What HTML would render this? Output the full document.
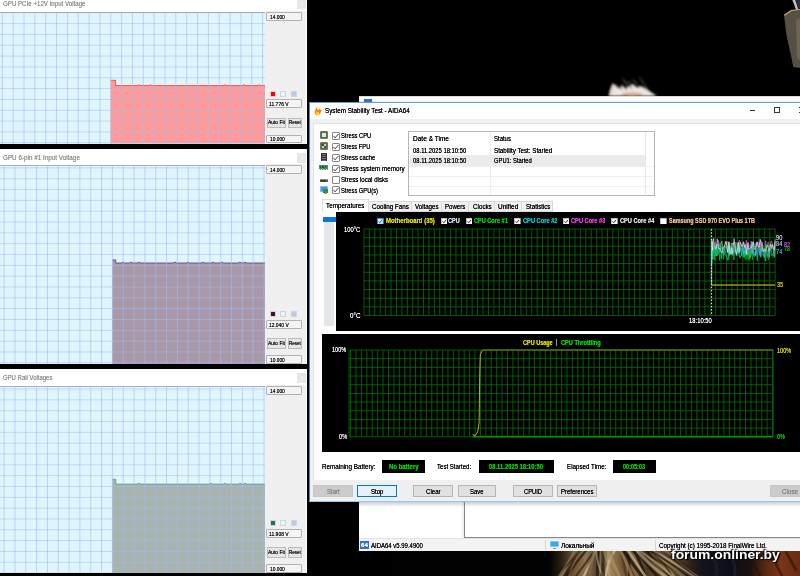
<!DOCTYPE html>
<html><head><meta charset="utf-8"><title>System Stability Test - AIDA64</title>
<style>
*{box-sizing:border-box;margin:0;padding:0}
html,body{width:800px;height:576px;overflow:hidden;background:#000}
body{position:relative;font-family:"Liberation Sans",sans-serif;font-size:8px;color:#000}
.a{position:absolute}
.t{position:absolute;white-space:nowrap;line-height:1;transform-origin:0 0;text-shadow:0 0 .4px currentColor}
.pn{position:absolute;left:0;width:307px;background:#fff;overflow:hidden}
.cls{position:absolute;left:297.1px;width:9px;height:9.7px;background:#e7e7e7}
.gr{position:absolute;left:0;width:265px;background:#dff6ff;overflow:hidden}
.gl{position:absolute;left:0;top:0;width:100%;height:100%;
 background-image:linear-gradient(to right,rgba(160,188,238,.62) 1.15px,transparent 1.15px),linear-gradient(to bottom,rgba(160,188,238,.55) 1.15px,transparent 1.15px);
 background-size:10.91px 11px;background-position:1px 0}
.sb{position:absolute;left:265px;width:41.2px;background:#f0f0f0}
.bx{position:absolute;left:266.2px;width:35.6px;height:8.9px;border:1px solid #b2b2b2;background:#f4f4f4;border-radius:1px}
.bt{position:absolute;height:10.4px;border:1px solid #bcbcbc;background:#e6e6e6}
.sw{position:absolute;width:6px;height:6px;border:1px solid #d4d4d4}
.cb{position:absolute;width:7.5px;height:7.5px;border:1px solid #444;background:#fff}
.btn{position:absolute;top:485px;height:11.7px;border:1px solid #b6b6b6;background:#e1e1e1}
.lb{position:absolute;background:#000}
</style></head>
<body>
<div class="pn" style="top:0px;height:143.6px"><div class="cls" style="top:-0.5px"></div><div class="sb" style="top:11px;height:132.6px"></div><div class="gr" style="top:12px;height:131.6px"><svg class="a" style="left:0;top:0" width="265" height="131.6" viewBox="0 0 265 131.6"><polygon points="110.6,131.6 110.6,68.3 115.6,68.3 115.6,73.6 138,73.6 139,72.4 140,73.6 149.5,73.6 150.5,72.4 151.5,73.6 224,73.6 225,72.4 226,73.6 243,73.6 244,72.4 245,73.6 258,73.6 259,72.4 260,73.6 265,73.6 265,131.6" fill="#ff9a9a"/><polyline points="110.6,68.3 115.6,68.3 115.6,73.6 138,73.6 139,72.4 140,73.6 149.5,73.6 150.5,72.4 151.5,73.6 224,73.6 225,72.4 226,73.6 243,73.6 244,72.4 245,73.6 258,73.6 259,72.4 260,73.6 265,73.6" fill="none" stroke="#ff2a2a" stroke-width="0.9" stroke-opacity=".85"/></svg><div class="gl" style="background-size:10.85px 10.83px;background-position:1.85px 0.3px"></div><div class="a" style="left:0;top:0;width:265px;height:1px;background:#a8adb6"></div></div><div class="bx" style="top:11.8px"></div><div class="sw" style="left:270px;top:90.5px;background:#f00"></div><div class="sw" style="left:280.4px;top:90.5px;background:#e3f9ff"></div><div class="sw" style="left:290.8px;top:90.5px;background:#b3cdf0"></div><div class="bx" style="top:98.9px"></div><div class="bt" style="left:267.2px;width:19px;top:117.5px"></div><div class="bt" style="left:287.6px;width:14px;top:117.5px"></div><div class="bx" style="top:134.5px"></div></div><div class="t" style="left:2.50px;top:-0.06px;font-size:7.8px;color:#929292;transform:scaleX(0.788);">GPU PCIe +12V Input Voltage</div><div class="t" style="left:299.60px;top:0.40px;font-size:7.5px;color:#efefef;transform:scaleX(0.911);">×</div><div class="t" style="left:269.50px;top:14.93px;font-size:5.9px;color:#111;transform:scaleX(0.821);">14.000</div><div class="t" style="left:269.30px;top:102.13px;font-size:5.9px;color:#111;transform:scaleX(0.851);">11.776 V</div><div class="t" style="left:268.40px;top:119.88px;font-size:5.8px;color:#111;transform:scaleX(0.846);">Auto Fit</div><div class="t" style="left:288.90px;top:119.88px;font-size:5.8px;color:#111;transform:scaleX(0.779);">Reset</div><div class="t" style="left:269.50px;top:137.03px;font-size:5.9px;color:#111;transform:scaleX(0.821);">10.000</div><div class="pn" style="top:148.7px;height:215.7px"><div class="cls" style="top:4.3px"></div><div class="sb" style="top:15.6px;height:200.1px"></div><div class="gr" style="top:16.6px;height:199.1px"><svg class="a" style="left:0;top:0" width="265" height="199.1" viewBox="0 0 265 199.1"><polygon points="112.2,199.1 112.2,94.9 115.8,94.9 115.8,98 122,98 123,96.8 124,98 130,98 131,96.8 132,98 138,98 139,96.8 140,98 174,98 175,96.8 176,98 187,98 188,96.8 189,98 202,98 203,96.8 204,98 212,98 213,96.8 214,98 221,98 222,96.8 223,98 239,98 240,96.8 241,98 244,98 245,96.8 246,98 265,98 265,199.1" fill="#a898a8"/><polyline points="112.2,94.9 115.8,94.9 115.8,98 122,98 123,96.8 124,98 130,98 131,96.8 132,98 138,98 139,96.8 140,98 174,98 175,96.8 176,98 187,98 188,96.8 189,98 202,98 203,96.8 204,98 212,98 213,96.8 214,98 221,98 222,96.8 223,98 239,98 240,96.8 241,98 244,98 245,96.8 246,98 265,98" fill="none" stroke="#5a3060" stroke-width="0.9" stroke-opacity=".85"/></svg><div class="gl" style="background-size:10.84px 10.83px;background-position:3.65px 2.4px"></div><div class="a" style="left:0;top:0;width:265px;height:1px;background:#a8adb6"></div></div><div class="bx" style="top:16.4px"></div><div class="sw" style="left:270px;top:162.6px;background:#401040"></div><div class="sw" style="left:280.4px;top:162.6px;background:#e3f9ff"></div><div class="sw" style="left:290.8px;top:162.6px;background:#b3cdf0"></div><div class="bx" style="top:171px"></div><div class="bt" style="left:267.2px;width:19px;top:189.6px"></div><div class="bt" style="left:287.6px;width:14px;top:189.6px"></div><div class="bx" style="top:206.6px"></div></div><div class="t" style="left:2.50px;top:153.54px;font-size:7.8px;color:#929292;transform:scaleX(0.810);">GPU 6-pin #1 Input Voltage</div><div class="t" style="left:299.60px;top:153.90px;font-size:7.5px;color:#efefef;transform:scaleX(0.911);">×</div><div class="t" style="left:269.50px;top:168.23px;font-size:5.9px;color:#111;transform:scaleX(0.821);">14.000</div><div class="t" style="left:269.30px;top:322.93px;font-size:5.9px;color:#111;transform:scaleX(0.835);">12.040 V</div><div class="t" style="left:268.40px;top:340.68px;font-size:5.8px;color:#111;transform:scaleX(0.846);">Auto Fit</div><div class="t" style="left:288.90px;top:340.68px;font-size:5.8px;color:#111;transform:scaleX(0.779);">Reset</div><div class="t" style="left:269.50px;top:357.83px;font-size:5.9px;color:#111;transform:scaleX(0.821);">10.000</div><div class="pn" style="top:369.1px;height:204.3px"><div class="cls" style="top:4.3px"></div><div class="sb" style="top:16px;height:188.3px"></div><div class="gr" style="top:17px;height:187.3px"><svg class="a" style="left:0;top:0" width="265" height="187.3" viewBox="0 0 265 187.3"><polygon points="112.3,187.3 112.3,93.2 115.8,93.2 115.8,98.1 138,98.1 139,96.9 140,98.1 210,98.1 211,96.9 212,98.1 224,98.1 225,96.9 226,98.1 239,98.1 240,96.9 241,98.1 244,98.1 245,96.9 246,98.1 265,98.1 265,187.3" fill="#a8b4b0"/><polyline points="112.3,93.2 115.8,93.2 115.8,98.1 138,98.1 139,96.9 140,98.1 210,98.1 211,96.9 212,98.1 224,98.1 225,96.9 226,98.1 239,98.1 240,96.9 241,98.1 244,98.1 245,96.9 246,98.1 265,98.1" fill="none" stroke="#5f8f88" stroke-width="0.9" stroke-opacity=".85"/></svg><div class="gl" style="background-size:10.84px 10.83px;background-position:3.65px 2.55px"></div><div class="a" style="left:0;top:0;width:265px;height:1px;background:#a8adb6"></div></div><div class="bx" style="top:16.8px"></div><div class="sw" style="left:270px;top:151.2px;background:#207068"></div><div class="sw" style="left:280.4px;top:151.2px;background:#e3f9ff"></div><div class="sw" style="left:290.8px;top:151.2px;background:#b3cdf0"></div><div class="bx" style="top:159.6px"></div><div class="bt" style="left:267.2px;width:19px;top:178.2px"></div><div class="bt" style="left:287.6px;width:14px;top:178.2px"></div><div class="bx" style="top:195.2px"></div></div><div class="t" style="left:2.50px;top:373.94px;font-size:7.8px;color:#929292;transform:scaleX(0.765);">GPU Rail Voltages</div><div class="t" style="left:299.60px;top:374.30px;font-size:7.5px;color:#efefef;transform:scaleX(0.911);">×</div><div class="t" style="left:269.50px;top:389.03px;font-size:5.9px;color:#111;transform:scaleX(0.821);">14.000</div><div class="t" style="left:269.30px;top:531.93px;font-size:5.9px;color:#111;transform:scaleX(0.851);">11.908 V</div><div class="t" style="left:268.40px;top:549.68px;font-size:5.8px;color:#111;transform:scaleX(0.846);">Auto Fit</div><div class="t" style="left:288.90px;top:549.68px;font-size:5.8px;color:#111;transform:scaleX(0.779);">Reset</div><div class="t" style="left:269.50px;top:566.83px;font-size:5.9px;color:#111;transform:scaleX(0.821);">10.000</div><svg class="a" style="left:308px;top:0" width="492" height="576" viewBox="308 0 492 576">
<defs>
<filter id="b1" x="-20%" y="-20%" width="140%" height="140%"><feGaussianBlur stdDeviation="1.2"/></filter>
<filter id="b3" x="-20%" y="-40%" width="140%" height="180%"><feGaussianBlur stdDeviation="0.9"/></filter>
<filter id="b2" x="-20%" y="-20%" width="140%" height="140%"><feGaussianBlur stdDeviation="0.7"/></filter>
<clipPath id="furclip"><rect x="308" y="551" width="492" height="25"/></clipPath>
<linearGradient id="fur" x1="0" x2="1" y1="0" y2="0">
<stop offset="0" stop-color="#000"/><stop offset=".49" stop-color="#020202"/>
<stop offset=".515" stop-color="#2a2014"/><stop offset=".54" stop-color="#6a5434"/><stop offset=".565" stop-color="#8c7450"/><stop offset=".59" stop-color="#4a3a24"/>
<stop offset=".615" stop-color="#9a8058"/><stop offset=".64" stop-color="#6a5230"/><stop offset=".665" stop-color="#86683c"/>
<stop offset=".69" stop-color="#4a3822"/><stop offset=".72" stop-color="#7a5c34"/><stop offset=".75" stop-color="#5a4228"/><stop offset=".78" stop-color="#2a2018"/>
<stop offset=".80" stop-color="#14141c"/><stop offset=".86" stop-color="#0c0e18"/><stop offset=".90" stop-color="#1a1210"/><stop offset=".93" stop-color="#5a2812"/><stop offset=".96" stop-color="#7a3616"/><stop offset="1" stop-color="#6a2c12"/>
</linearGradient>
</defs>
<rect x="308" y="551" width="492" height="25" fill="url(#fur)"/>
<!-- white fur tuft top -->
<g filter="url(#b3)">
<path d="M608.6 96 L609.8 90 L612.5 83.2 L616 85.5 L619 88.6 L622.5 85 L626 88.4 L629 86 L633 84 L637 87.4 L641 86 L646 88.5 L651 92 L657 96 Z" fill="#ded6ce"/>
<path d="M612 96 L614 89 L622 88 L630 87 L640 88.5 L648 92 L653 96 Z" fill="#efe8e2"/>
<ellipse cx="632" cy="94.2" rx="11" ry="2.2" fill="#d8b09e"/>
<path d="M616.5 84 L622 90 M619.5 82 L627 90 M624 80 L632 89" stroke="#0a0a0a" stroke-width="1.1" stroke-opacity=".8" fill="none"/>
<path d="M622.6 78.6 L628 86 M632.6 79 L640 88 M639.5 77.5 L648 89.5 M628 80.5 L634 87" stroke="#c8c8c4" stroke-width="0.9" stroke-opacity=".6" fill="none"/>
</g>
<!-- object top-right -->
<g filter="url(#b2)">
<path d="M791 10.4 L800 9 L800 68 L793.3 67 L791 55.5 L786.4 34.7 L784 15.3 Z" fill="#575044"/>
<path d="M796 20 L800 18 L800 60 L797 58 Z" fill="#6e6556"/>
<path d="M784.3 15.4 L791 10.6 L800 9.4" stroke="#b89872" stroke-width="1.3" fill="none"/>
<path d="M792.4 0 L795.2 0 L798.2 9 L796 9.4 Z" fill="#c6c6be"/>
<path d="M795.6 0 L800 0 L800 8.6 L798.4 8.8 Z" fill="#2c3242"/>
</g>
<!-- fur streaks bottom -->
<g filter="url(#b2)" stroke-linecap="round" fill="none" clip-path="url(#furclip)">
<path d="M589.2 546.7 Q568.1 564.5 551.6 578" stroke="#1a120a" stroke-width="3.2" stroke-opacity="0.53"/>
<path d="M579.8 542.5 Q568.9 561.4 557.5 578" stroke="#a88c60" stroke-width="1.8" stroke-opacity="0.47"/>
<path d="M592.6 542.4 Q570.0 562.5 559.9 578" stroke="#a88c60" stroke-width="2.7" stroke-opacity="0.69"/>
<path d="M590.3 545.0 Q576.7 561.2 565.9 578" stroke="#0c0806" stroke-width="2.5" stroke-opacity="0.56"/>
<path d="M586.0 543.4 Q573.4 558.1 563.7 578" stroke="#2a1c10" stroke-width="2.9" stroke-opacity="0.76"/>
<path d="M582.1 546.1 Q573.0 564.6 568.0 578" stroke="#8a6c44" stroke-width="1.7" stroke-opacity="0.47"/>
<path d="M596.3 546.7 Q582.7 559.9 579.4 578" stroke="#8a6c44" stroke-width="1.7" stroke-opacity="0.58"/>
<path d="M599.8 542.1 Q588.7 560.0 574.5 578" stroke="#2a1c10" stroke-width="1.8" stroke-opacity="0.72"/>
<path d="M595.1 544.4 Q593.4 558.2 587.7 578" stroke="#a88c60" stroke-width="2.4" stroke-opacity="0.80"/>
<path d="M597.1 547.1 Q592.9 560.2 582.5 578" stroke="#c8b48e" stroke-width="2.0" stroke-opacity="0.85"/>
<path d="M598.3 542.4 Q590.8 561.0 587.5 578" stroke="#4a3420" stroke-width="3.1" stroke-opacity="0.46"/>
<path d="M602.1 545.4 Q601.3 559.8 598.0 578" stroke="#a88c60" stroke-width="3.3" stroke-opacity="0.51"/>
<path d="M597.6 545.8 Q598.2 563.0 597.5 578" stroke="#0c0806" stroke-width="2.9" stroke-opacity="0.61"/>
<path d="M596.4 547.8 Q595.8 564.1 604.3 578" stroke="#c8b48e" stroke-width="1.8" stroke-opacity="0.55"/>
<path d="M616.1 547.9 Q606.5 562.8 605.8 578" stroke="#d8c8a8" stroke-width="2.5" stroke-opacity="0.71"/>
<path d="M602.8 542.1 Q602.6 559.7 603.2 578" stroke="#0c0806" stroke-width="3.3" stroke-opacity="0.47"/>
<path d="M603.0 544.7 Q605.0 562.7 615.8 578" stroke="#a88c60" stroke-width="1.8" stroke-opacity="0.66"/>
<path d="M609.2 543.9 Q607.1 561.5 609.3 578" stroke="#c8b48e" stroke-width="2.5" stroke-opacity="0.48"/>
<path d="M605.0 545.3 Q613.7 564.0 620.2 578" stroke="#a88c60" stroke-width="3.4" stroke-opacity="0.74"/>
<path d="M619.2 547.4 Q624.4 562.2 626.6 578" stroke="#4a3420" stroke-width="2.2" stroke-opacity="0.77"/>
<path d="M607.5 542.4 Q612.7 557.9 625.1 578" stroke="#8a6c44" stroke-width="2.3" stroke-opacity="0.55"/>
<path d="M625.5 542.5 Q630.0 557.4 629.2 578" stroke="#1a120a" stroke-width="2.4" stroke-opacity="0.69"/>
<path d="M622.4 547.5 Q625.1 559.8 634.7 578" stroke="#2a1c10" stroke-width="2.5" stroke-opacity="0.57"/>
<path d="M618.4 547.6 Q626.9 561.2 632.6 578" stroke="#a88c60" stroke-width="3.0" stroke-opacity="0.61"/>
<path d="M621.0 545.5 Q628.5 559.6 643.7 578" stroke="#0c0806" stroke-width="3.2" stroke-opacity="0.65"/>
<path d="M621.0 543.0 Q632.1 559.2 643.2 578" stroke="#2a1c10" stroke-width="3.3" stroke-opacity="0.54"/>
<path d="M631.6 547.1 Q641.2 561.4 645.7 578" stroke="#1a120a" stroke-width="2.8" stroke-opacity="0.78"/>
<path d="M625.2 546.7 Q634.0 560.2 646.6 578" stroke="#d8c8a8" stroke-width="2.6" stroke-opacity="0.63"/>
<path d="M637.1 547.9 Q643.1 560.6 658.6 578" stroke="#0c0806" stroke-width="3.0" stroke-opacity="0.66"/>
<path d="M626.6 544.9 Q640.3 558.5 662.9 578" stroke="#2a1c10" stroke-width="2.8" stroke-opacity="0.64"/>
<path d="M634.8 547.7 Q649.0 565.8 667.5 578" stroke="#d8c8a8" stroke-width="3.0" stroke-opacity="0.51"/>
<path d="M644.5 546.3 Q652.3 561.9 672.5 578" stroke="#0c0806" stroke-width="1.8" stroke-opacity="0.70"/>
<path d="M646.3 544.8 Q660.2 559.6 674.8 578" stroke="#b89c70" stroke-width="3.0" stroke-opacity="0.74"/>
<path d="M647.3 547.9 Q666.0 563.2 672.9 578" stroke="#2a1c10" stroke-width="2.0" stroke-opacity="0.77"/>
<path d="M633.1 544.6 Q657.0 562.9 674.2 578" stroke="#c8b48e" stroke-width="2.2" stroke-opacity="0.64"/>
<path d="M634.2 545.2 Q661.1 564.1 690.4 578" stroke="#2a1c10" stroke-width="2.4" stroke-opacity="0.64"/>
<path d="M649.4 547.7 Q669.2 565.5 685.8 578" stroke="#b89c70" stroke-width="3.1" stroke-opacity="0.48"/>
<path d="M648.6 543.0 Q670.9 562.9 695.0 578" stroke="#d8c8a8" stroke-width="3.1" stroke-opacity="0.55"/>
<path d="M642.4 545.3 Q667.8 561.6 693.2 578" stroke="#0c0806" stroke-width="2.1" stroke-opacity="0.61"/>
<path d="M660.0 545.1 Q679.2 563.4 700.2 578" stroke="#8a6c44" stroke-width="1.6" stroke-opacity="0.68"/>
<path d="M651.7 547.5 Q681.2 562.2 704.5 578" stroke="#2a1c10" stroke-width="3.3" stroke-opacity="0.55"/>
<path d="M770 552 L782 576 M786 552 L796 570 M752 560 L760 576" stroke="#2a0e06" stroke-width="2.6" stroke-opacity=".6"/>
<path d="M705 552 Q720 560 716 576 M728 552 Q738 566 734 576" stroke="#1c2230" stroke-width="3" stroke-opacity=".7"/>
</g>
</svg><div class="a" style="left:358.5px;top:95.5px;width:442px;height:455.5px;background:linear-gradient(to bottom,#c8c8c8 0,#fdfdfd 1.4px,#fdfdfd 3.6px,#ececec 6.4px);overflow:hidden"><div class="a" style="left:5px;top:3px;width:8.5px;height:8.5px;background:#2a6fd0"></div></div><div class="t" style="left:375.50px;top:100.54px;font-size:7.8px;color:#a8a8a8;transform:scaleX(0.783);">AIDA64 Extreme</div><div class="a" style="left:358.5px;top:501.8px;width:441.5px;height:36.7px;background:#fff"></div><div class="a" style="left:461.5px;top:501px;width:3px;height:37.5px;background:#f0f0f0"></div><div class="a" style="left:464px;top:501px;width:336px;height:37px;border-left:1px solid #828790;border-bottom:1px solid #828790"></div><div class="a" style="left:358.5px;top:501.8px;width:441.5px;height:5px;background:linear-gradient(to bottom,rgba(90,120,160,.35),rgba(120,140,170,0))"></div><div class="a" style="left:358.5px;top:538.4px;width:441.5px;height:12.6px;background:#f3f3f3;border-top:1px solid #e2e2e2"></div><div class="a" style="left:360.2px;top:541px;width:8.6px;height:8.4px;background:#2f6fd0"></div><div class="t" style="left:361.00px;top:542.08px;font-size:6px;color:#fff;transform:scaleX(1.017);font-weight:bold;">64</div><div class="t" style="left:370.80px;top:541.54px;font-size:7.8px;color:#000;transform:scaleX(0.767);">AIDA64 v5.99.4900</div><div class="a" style="left:545px;top:540px;width:1px;height:10px;background:#d4d4d4"></div><div class="a" style="left:655px;top:540px;width:1px;height:10px;background:#d4d4d4"></div><div class="a" style="left:550px;top:541px;width:8.6px;height:6px;background:#35a8f0;border:1px solid #7fc6f5;border-radius:1px"></div><div class="a" style="left:552.5px;top:547.5px;width:3.6px;height:1.6px;background:#8a9aa8"></div><div class="t" style="left:561.00px;top:541.54px;font-size:7.8px;color:#000;transform:scaleX(0.832);">Локальный</div><div class="t" style="left:658.50px;top:541.54px;font-size:7.8px;color:#000;transform:scaleX(0.802);">Copyright (c) 1995-2018 FinalWire Ltd.</div><div class="t" style="left:670.50px;top:548.65px;font-size:12.6px;color:#fff;transform:scaleX(1.103);font-weight:bold;text-shadow:0 0 2px #000,1px 1px 1px #000,-1px -1px 1px rgba(0,0,0,.8);z-index:50">forum.onliner.by</div><div class="a" style="left:308.6px;top:101.8px;width:500px;height:400.4px;background:#f0f0f0;border-top:1px solid #5e9ed6;border-left:1px solid #4d82bd;border-bottom:1px solid #9cc4ea"></div><div class="a" style="left:309.6px;top:102.6px;width:491px;height:16.3px;background:#fff"></div><svg class="a" style="left:314px;top:105.5px;overflow:visible" width="8" height="10" viewBox="0 0 8 10"><defs><filter id="fb" x="-30%" y="-30%" width="160%" height="160%"><feGaussianBlur stdDeviation="0.35"/></filter><filter id="fb2" x="-50%" y="-50%" width="200%" height="200%"><feGaussianBlur stdDeviation="0.6"/></filter></defs><path filter="url(#fb)" d="M2 0.7 C2.6 2 3.6 3.2 4.2 4.3 C4.8 3.8 5.4 3 5.7 2.2 C6 2.8 6.2 3.2 6.4 3.8 C6.8 3.6 7.1 3.4 7.4 3.1 C7.6 4.2 7.4 5.2 6.8 6.2 C6.2 7.8 4.8 9.2 3.4 9.2 C2 9.2 0.8 8 0.8 6.5 C0.8 5.8 1 5.2 1.3 4.6 C1.9 3.4 2.1 2 2 0.7 Z" fill="#ff7c0a"/><ellipse filter="url(#fb2)" cx="3.5" cy="7.3" rx="1.5" ry="1.7" fill="#ffe000"/></svg><div class="t" style="left:325.30px;top:107.34px;font-size:8px;color:#000;transform:scaleX(0.785);">System Stability Test - AIDA64</div><div class="a" style="left:749.6px;top:109.8px;width:5.4px;height:1px;background:#333"></div><div class="a" style="left:774px;top:107px;width:5.8px;height:5.8px;border:1px solid #333"></div><svg class="a" style="left:798.5px;top:107px" width="6" height="6" viewBox="0 0 6 6"><path d="M0 0L6 6M6 0L0 6" stroke="#333" stroke-width="1"/></svg><div class="a" style="left:313.4px;top:123.4px;width:490px;height:356.6px;background:#fff;border-left:1px solid #e4e4e4;border-top:1px solid #e4e4e4"></div><svg class="a" style="left:332px;top:132px" width="8" height="8" viewBox="0 0 8 8"><rect x="0.5" y="0.5" width="7" height="7" rx="0.5" fill="#fff" stroke="#707070" stroke-width="0.85"/><path d="M1.5 4.0L3.1 5.8L6.5 1.9" fill="none" stroke="#404040" stroke-width="1"/></svg><div class="t" style="left:341.00px;top:131.94px;font-size:8px;color:#000;transform:scaleX(0.725);">Stress CPU</div><svg class="a" style="left:332px;top:143px" width="8" height="8" viewBox="0 0 8 8"><rect x="0.5" y="0.5" width="7" height="7" rx="0.5" fill="#fff" stroke="#707070" stroke-width="0.85"/><path d="M1.5 4.0L3.1 5.8L6.5 1.9" fill="none" stroke="#404040" stroke-width="1"/></svg><div class="t" style="left:341.00px;top:143.14px;font-size:8px;color:#000;transform:scaleX(0.716);">Stress FPU</div><svg class="a" style="left:332px;top:154px" width="8" height="8" viewBox="0 0 8 8"><rect x="0.5" y="0.5" width="7" height="7" rx="0.5" fill="#fff" stroke="#707070" stroke-width="0.85"/><path d="M1.5 4.0L3.1 5.8L6.5 1.9" fill="none" stroke="#404040" stroke-width="1"/></svg><div class="t" style="left:341.00px;top:154.14px;font-size:8px;color:#000;transform:scaleX(0.744);">Stress cache</div><svg class="a" style="left:332px;top:165px" width="8" height="8" viewBox="0 0 8 8"><rect x="0.5" y="0.5" width="7" height="7" rx="0.5" fill="#fff" stroke="#707070" stroke-width="0.85"/><path d="M1.5 4.0L3.1 5.8L6.5 1.9" fill="none" stroke="#404040" stroke-width="1"/></svg><div class="t" style="left:341.00px;top:165.04px;font-size:8px;color:#000;transform:scaleX(0.782);">Stress system memory</div><svg class="a" style="left:332px;top:176px" width="8" height="8" viewBox="0 0 8 8"><rect x="0.5" y="0.5" width="7" height="7" rx="0.5" fill="#fff" stroke="#707070" stroke-width="0.85"/></svg><div class="t" style="left:341.00px;top:175.84px;font-size:8px;color:#000;transform:scaleX(0.761);">Stress local disks</div><svg class="a" style="left:332px;top:186px" width="8" height="8" viewBox="0 0 8 8"><rect x="0.5" y="0.5" width="7" height="7" rx="0.5" fill="#fff" stroke="#707070" stroke-width="0.85"/><path d="M1.5 4.0L3.1 5.8L6.5 1.9" fill="none" stroke="#404040" stroke-width="1"/></svg><div class="t" style="left:341.00px;top:186.64px;font-size:8px;color:#000;transform:scaleX(0.718);">Stress GPU(s)</div><div class="a" style="left:319.8px;top:131px;width:8.2px;height:8px;background:#3f7d4e;border:1px solid #7a7448;border-radius:1px"><div class="a" style="left:1px;top:1px;width:4.2px;height:4px;background:#e4e6e4"></div></div><div class="a" style="left:319.8px;top:141.9px;width:8.2px;height:8px;background:#3f7d4e;border:1px solid #7a7448;border-radius:1px"><div class="a" style="left:1px;top:1px;width:4.2px;height:4px;background:#c8d0c8"></div><div class="a" style="left:1.4px;top:1.4px;width:1.8px;height:1.8px;background:#444"></div><div class="a" style="left:3.2px;top:3.2px;width:1.8px;height:1.6px;background:#555"></div></div><div class="a" style="left:320.7px;top:152.6px;width:6.4px;height:8.2px;background:repeating-linear-gradient(to bottom,#3a3a3a 0 1.3px,#6e6e6e 1.3px 2.05px);border-left:1px solid #2a2a2a;border-right:1px solid #2a2a2a"></div><div class="a" style="left:319.2px;top:165px;width:8.8px;height:4px;background:#3a9858"></div><div class="a" style="left:320px;top:166px;width:7.2px;height:1.8px;background:repeating-linear-gradient(to right,#1e5a34 0 1.4px,#3a9858 1.4px 2.4px)"></div><div class="a" style="left:319.6px;top:169px;width:8px;height:1px;background:repeating-linear-gradient(to right,#8a8a5a 0 1px,#ddd 1px 1.8px)"></div><div class="a" style="left:320px;top:178.8px;width:7.6px;height:3.2px;background:#3c3c3c;border-radius:1px;border-top:1px solid #8a8a8a"></div><div class="a" style="left:325.6px;top:180.4px;width:1.2px;height:1px;background:#4c4"></div><div class="a" style="left:319.5px;top:186px;width:8.5px;height:5.6px;background:#2f9cf0;border:1px solid #7cc0f4"></div><div class="a" style="left:323.2px;top:189.4px;width:4.8px;height:3.4px;background:#3a8a3a"></div><div class="a" style="left:323.8px;top:192.6px;width:3.6px;height:0.8px;background:#c8a040"></div><div class="a" style="left:408.3px;top:131.3px;width:247.2px;height:64.4px;background:#fff;border:1px solid #b0b5be"></div><div class="a" style="left:409.8px;top:155.1px;width:234.8px;height:10.9px;background:#ebebeb"></div><div class="a" style="left:490px;top:132.3px;width:1px;height:62px;background:#ececec"></div><div class="a" style="left:644.6px;top:132.3px;width:1px;height:62px;background:#e6e6e6"></div><div class="a" style="left:409.3px;top:165.6px;width:245px;height:1px;background:#f0f0f0"></div><div class="a" style="left:409.3px;top:176px;width:245px;height:1px;background:#f0f0f0"></div><div class="a" style="left:409.3px;top:186.2px;width:245px;height:1px;background:#f0f0f0"></div><div class="t" style="left:412.50px;top:135.44px;font-size:8px;color:#000;transform:scaleX(0.818);">Date &amp; Time</div><div class="t" style="left:493.70px;top:135.44px;font-size:8px;color:#000;transform:scaleX(0.745);">Status</div><div class="t" style="left:412.50px;top:147.14px;font-size:8px;color:#000;transform:scaleX(0.731);">08.11.2025 18:10:50</div><div class="t" style="left:493.70px;top:147.14px;font-size:8px;color:#000;transform:scaleX(0.777);">Stability Test: Started</div><div class="t" style="left:412.50px;top:157.04px;font-size:8px;color:#000;transform:scaleX(0.731);">08.11.2025 18:10:50</div><div class="t" style="left:493.70px;top:157.04px;font-size:8px;color:#000;transform:scaleX(0.725);">GPU1: Started</div><div class="a" style="left:322px;top:199.3px;width:47.2px;height:13px;background:#fff;border:1px solid #dedede;border-bottom:none"></div><div class="t" style="left:326.25px;top:201.74px;font-size:8px;color:#000;transform:scaleX(0.786);">Temperatures</div><div class="a" style="left:369.2px;top:201.2px;width:42.8px;height:10.8px;background:#f0f0f0;border:1px solid #d9d9d9;border-left:none"></div><div class="t" style="left:371.60px;top:202.54px;font-size:8px;color:#000;transform:scaleX(0.781);">Cooling Fans</div><div class="a" style="left:412px;top:201.2px;width:29.8px;height:10.8px;background:#f0f0f0;border:1px solid #d9d9d9;border-left:none"></div><div class="t" style="left:415.30px;top:202.54px;font-size:8px;color:#000;transform:scaleX(0.764);">Voltages</div><div class="a" style="left:441.8px;top:201.2px;width:27px;height:10.8px;background:#f0f0f0;border:1px solid #d9d9d9;border-left:none"></div><div class="t" style="left:445.30px;top:202.54px;font-size:8px;color:#000;transform:scaleX(0.761);">Powers</div><div class="a" style="left:468.8px;top:201.2px;width:26px;height:10.8px;background:#f0f0f0;border:1px solid #d9d9d9;border-left:none"></div><div class="t" style="left:472.50px;top:202.54px;font-size:8px;color:#000;transform:scaleX(0.781);">Clocks</div><div class="a" style="left:494.8px;top:201.2px;width:27.2px;height:10.8px;background:#f0f0f0;border:1px solid #d9d9d9;border-left:none"></div><div class="t" style="left:498.40px;top:202.54px;font-size:8px;color:#000;transform:scaleX(0.817);">Unified</div><div class="a" style="left:522px;top:201.2px;width:31.4px;height:10.8px;background:#f0f0f0;border:1px solid #d9d9d9;border-left:none"></div><div class="t" style="left:525.60px;top:202.54px;font-size:8px;color:#000;transform:scaleX(0.762);">Statistics</div><div class="a" style="left:324.2px;top:221.6px;width:9.8px;height:104.6px;background:#e3e7ea"></div><div class="a" style="left:322.8px;top:216.6px;width:12.8px;height:5.2px;background:#0a78d7"></div><div class="lb" style="left:335.8px;top:211.8px;width:470px;height:119.1px"></div><div class="lb" style="left:321.8px;top:333.6px;width:480px;height:118px"></div><svg class="a" style="left:363.9px;top:228.8px;overflow:visible" width="411.1" height="86.5" viewBox="0 0 411.1 86.5"><path d="M0.00 0V86.50M5.41 0V86.50M10.82 0V86.50M16.23 0V86.50M21.64 0V86.50M27.05 0V86.50M32.46 0V86.50M37.87 0V86.50M43.28 0V86.50M48.69 0V86.50M54.10 0V86.50M59.51 0V86.50M64.92 0V86.50M70.33 0V86.50M75.74 0V86.50M81.15 0V86.50M86.56 0V86.50M91.97 0V86.50M97.38 0V86.50M102.79 0V86.50M108.20 0V86.50M113.61 0V86.50M119.02 0V86.50M124.43 0V86.50M129.84 0V86.50M135.25 0V86.50M140.66 0V86.50M146.07 0V86.50M151.48 0V86.50M156.89 0V86.50M162.30 0V86.50M167.71 0V86.50M173.12 0V86.50M178.53 0V86.50M183.94 0V86.50M189.35 0V86.50M194.76 0V86.50M200.17 0V86.50M205.58 0V86.50M210.99 0V86.50M216.40 0V86.50M221.81 0V86.50M227.22 0V86.50M232.63 0V86.50M238.04 0V86.50M243.45 0V86.50M248.86 0V86.50M254.27 0V86.50M259.68 0V86.50M265.09 0V86.50M270.50 0V86.50M275.91 0V86.50M281.32 0V86.50M286.73 0V86.50M292.14 0V86.50M297.55 0V86.50M302.96 0V86.50M308.37 0V86.50M313.78 0V86.50M319.19 0V86.50M324.60 0V86.50M330.01 0V86.50M335.42 0V86.50M340.83 0V86.50M346.24 0V86.50M351.65 0V86.50M357.06 0V86.50M362.47 0V86.50M367.88 0V86.50M373.29 0V86.50M378.70 0V86.50M384.11 0V86.50M389.52 0V86.50M394.93 0V86.50M400.34 0V86.50M405.75 0V86.50M411.10 0V86.50M0 0.00H411.10M0 8.65H411.10M0 17.30H411.10M0 25.95H411.10M0 34.60H411.10M0 43.25H411.10M0 51.90H411.10M0 60.55H411.10M0 69.20H411.10M0 77.85H411.10M0 86.50H411.10" stroke="#006e00" stroke-width="0.85" fill="none"/><path d="M347.60 0V86.50" stroke="#f0f0f0" stroke-width="1" stroke-dasharray="1.6 1.6" fill="none"/><path d="M347.60 56.02H411.10" stroke="#a49400" stroke-width="1.3" fill="none"/><polyline points="347.60,34.60 347.90,12.98 348.50,13.07 349.62,21.80 350.43,18.58 351.27,20.75 352.49,14.89 353.81,25.22 355.06,22.80 356.10,22.68 357.22,14.46 357.88,12.02 358.81,20.40 359.89,18.34 360.58,18.78 361.33,12.41 362.34,14.02 363.11,19.89 363.79,23.30 364.62,12.93 365.31,23.27 366.29,19.61 367.26,26.01 368.34,13.94 369.12,16.25 369.78,13.07 370.83,13.06 372.19,25.61 373.25,21.86 374.09,13.35 375.06,25.79 375.69,28.47 376.76,28.26 377.65,24.21 378.36,14.87 379.66,25.17 380.74,21.63 381.95,26.57 383.03,17.76 384.04,21.00 384.94,19.51 386.16,28.16 387.25,12.19 388.23,25.23 388.91,13.11 389.62,26.06 390.66,27.58 391.46,25.96 392.17,15.19 393.35,13.20 394.13,18.60 395.01,18.59 396.05,14.20 396.87,28.25 398.16,13.15 399.51,23.24 400.80,28.46 402.10,16.31 402.75,21.51 403.46,26.70 404.07,27.57 405.06,21.59 406.44,13.15 407.56,11.95 408.34,16.34 409.66,20.74 410.62,28.26 411.10,12.98" fill="none" stroke="#b0c0e0" stroke-width="0.62" stroke-linejoin="miter"/><polyline points="347.60,34.60 347.90,12.11 348.50,28.03 349.65,22.83 350.43,14.26 351.62,12.95 352.39,26.75 353.66,24.43 354.48,11.49 355.73,16.85 356.92,17.15 357.73,20.02 358.93,20.55 359.83,26.15 360.52,17.11 361.91,19.39 363.11,12.33 364.06,14.36 365.08,26.89 366.16,25.23 367.16,14.21 367.91,24.94 369.03,20.93 370.21,24.16 370.92,16.74 372.03,13.45 373.33,17.06 374.09,21.07 375.26,11.07 376.35,22.59 377.44,19.04 378.33,21.38 379.16,12.30 379.85,14.93 380.97,19.49 381.60,26.30 382.27,10.95 382.97,25.93 384.05,13.21 384.94,24.51 385.81,29.47 386.82,27.95 387.66,13.08 388.99,22.15 390.14,22.15 391.21,25.80 392.04,13.72 392.67,25.01 393.87,24.53 395.09,13.17 396.14,26.03 397.08,11.53 397.77,22.53 398.62,24.73 399.32,26.80 400.62,24.16 401.65,11.78 402.51,19.47 403.21,14.16 404.50,13.17 405.40,28.62 406.17,18.34 407.52,15.97 408.47,18.77 409.74,23.49 410.45,16.98 411.10,12.11" fill="none" stroke="#f050f0" stroke-width="0.66" stroke-linejoin="miter"/><polyline points="347.60,34.60 347.90,14.71 348.50,30.49 349.63,17.77 350.53,31.26 351.69,21.95 352.81,15.93 353.54,26.61 354.80,14.88 355.67,31.42 356.28,13.90 357.29,13.59 358.65,16.01 359.36,30.31 360.09,26.68 360.82,23.42 361.76,22.71 362.67,14.71 364.04,20.96 364.93,30.65 366.06,16.81 366.96,19.59 367.96,14.30 368.90,25.09 369.84,31.07 370.52,25.50 371.68,16.63 372.56,26.67 373.52,16.61 374.50,22.67 375.87,13.86 376.76,14.61 378.09,16.67 379.31,28.38 379.91,15.17 381.30,22.46 381.92,31.15 383.19,25.02 384.21,30.33 385.02,18.81 385.75,31.58 386.57,22.35 387.73,25.16 388.55,30.62 389.71,14.02 390.65,15.96 392.03,21.32 393.37,20.06 394.30,18.74 395.53,23.91 396.43,21.90 397.04,18.72 398.28,18.66 399.31,23.62 399.98,28.74 401.33,22.10 402.43,15.53 403.59,28.40 404.51,30.63 405.23,16.48 406.38,21.00 407.73,27.31 408.72,28.07 409.86,28.37 410.72,27.09 411.10,14.71" fill="none" stroke="#00d800" stroke-width="0.66" stroke-linejoin="miter"/><polyline points="347.60,34.60 347.90,16.43 348.50,30.02 349.84,29.79 350.91,17.25 352.01,26.73 352.86,16.12 354.01,15.46 355.38,22.40 356.11,17.19 356.76,18.28 357.38,29.49 358.65,22.19 359.65,23.71 360.48,19.24 361.75,24.89 362.53,27.82 363.75,31.31 364.65,20.47 365.26,15.74 366.23,24.21 366.89,21.04 367.71,17.94 369.08,26.53 369.87,18.98 371.11,17.07 372.07,16.42 372.77,26.54 373.71,18.18 375.09,24.98 376.40,17.70 377.68,26.67 379.07,18.22 380.29,28.84 380.95,16.99 381.74,24.42 382.70,23.49 383.76,25.99 384.49,20.72 385.29,16.39 386.64,15.59 387.94,24.01 388.63,15.54 389.42,25.37 390.68,25.07 391.42,26.94 392.20,20.43 393.29,31.63 394.06,18.18 395.01,18.53 395.91,26.41 396.80,19.36 397.92,22.65 398.63,19.13 399.96,19.51 400.58,23.50 401.76,32.00 402.42,21.39 403.74,21.66 404.98,24.59 406.13,20.27 407.06,20.34 408.12,24.33 409.19,26.84 410.30,20.20 411.10,16.43" fill="none" stroke="#00d8d8" stroke-width="0.66" stroke-linejoin="miter"/><polyline points="347.60,56.23 347.90,10.38 348.50,21.36 349.69,9.39 350.30,15.79 351.59,19.46 352.46,19.12 353.27,9.88 354.57,19.60 355.91,19.53 356.87,21.81 357.92,24.01 359.27,18.09 360.56,17.38 361.92,12.61 362.65,15.72 363.83,23.68 365.14,12.71 365.78,25.23 366.82,23.71 367.56,18.51 368.35,25.16 369.21,18.66 370.16,9.69 371.40,21.97 372.39,25.23 373.73,19.07 374.37,13.61 375.09,23.62 376.47,12.91 377.75,17.61 378.97,15.70 379.78,13.11 380.64,18.30 381.52,15.60 382.60,25.15 383.84,14.04 384.45,18.56 385.36,20.26 386.16,18.70 387.49,18.84 388.34,15.62 389.22,12.49 390.51,20.55 391.77,18.67 393.09,12.77 393.96,16.90 394.95,18.18 396.18,10.17 396.91,14.49 398.03,16.88 399.23,22.50 400.28,20.49 401.30,22.16 402.47,18.64 403.76,15.95 404.69,22.04 405.50,20.95 406.84,14.94 407.52,19.75 408.66,15.46 409.69,19.55 410.41,20.99 411.10,10.38" fill="none" stroke="#f4f4f4" stroke-width="0.6" stroke-linejoin="miter"/></svg><svg class="a" style="left:377.2px;top:217.6px" width="6.6" height="6.6" viewBox="0 0 6.6 6.6"><rect x="0.3" y="0.3" width="6" height="6" fill="#dcebfd" stroke="#2f86e0" stroke-width="0.9"/><path d="M1.5 3.4L2.8 4.8L5.1 1.8" fill="none" stroke="#1565c8" stroke-width="0.95"/></svg><div class="t" style="left:385.60px;top:217.46px;font-size:7.2px;color:#dcdc00;transform:scaleX(0.831);font-weight:bold;">Motherboard (35)</div><svg class="a" style="left:440.6px;top:217.6px" width="6.6" height="6.6" viewBox="0 0 6.6 6.6"><rect x="0.3" y="0.3" width="6" height="6" fill="#fff" stroke="#c8c8c8" stroke-width="0.6"/><path d="M1.5 3.4L2.8 4.8L5.1 1.8" fill="none" stroke="#222" stroke-width="0.95"/></svg><div class="t" style="left:448.00px;top:217.46px;font-size:7.2px;color:#d4dcf8;transform:scaleX(0.770);font-weight:bold;">CPU</div><svg class="a" style="left:465.6px;top:217.6px" width="6.6" height="6.6" viewBox="0 0 6.6 6.6"><rect x="0.3" y="0.3" width="6" height="6" fill="#fff" stroke="#c8c8c8" stroke-width="0.6"/><path d="M1.5 3.4L2.8 4.8L5.1 1.8" fill="none" stroke="#222" stroke-width="0.95"/></svg><div class="t" style="left:474.00px;top:217.46px;font-size:7.2px;color:#00d400;transform:scaleX(0.776);font-weight:bold;">CPU Core #1</div><svg class="a" style="left:514px;top:217.6px" width="6.6" height="6.6" viewBox="0 0 6.6 6.6"><rect x="0.3" y="0.3" width="6" height="6" fill="#fff" stroke="#c8c8c8" stroke-width="0.6"/><path d="M1.5 3.4L2.8 4.8L5.1 1.8" fill="none" stroke="#222" stroke-width="0.95"/></svg><div class="t" style="left:522.50px;top:217.46px;font-size:7.2px;color:#00c8c8;transform:scaleX(0.792);font-weight:bold;">CPU Core #2</div><svg class="a" style="left:562.5px;top:217.6px" width="6.6" height="6.6" viewBox="0 0 6.6 6.6"><rect x="0.3" y="0.3" width="6" height="6" fill="#fff" stroke="#c8c8c8" stroke-width="0.6"/><path d="M1.5 3.4L2.8 4.8L5.1 1.8" fill="none" stroke="#222" stroke-width="0.95"/></svg><div class="t" style="left:571.25px;top:217.46px;font-size:7.2px;color:#e23ce2;transform:scaleX(0.789);font-weight:bold;">CPU Core #3</div><svg class="a" style="left:611px;top:217.6px" width="6.6" height="6.6" viewBox="0 0 6.6 6.6"><rect x="0.3" y="0.3" width="6" height="6" fill="#fff" stroke="#c8c8c8" stroke-width="0.6"/><path d="M1.5 3.4L2.8 4.8L5.1 1.8" fill="none" stroke="#222" stroke-width="0.95"/></svg><div class="t" style="left:619.70px;top:217.46px;font-size:7.2px;color:#dcdcdc;transform:scaleX(0.788);font-weight:bold;">CPU Core #4</div><svg class="a" style="left:660px;top:217.6px" width="6.6" height="6.6" viewBox="0 0 6.6 6.6"><rect x="0.3" y="0.3" width="6" height="6" fill="#fff" stroke="#c8c8c8" stroke-width="0.6"/></svg><div class="t" style="left:668.75px;top:217.46px;font-size:7.2px;color:#e4bc88;transform:scaleX(0.760);font-weight:bold;">Samsung SSD 970 EVO Plus 1TB</div><div class="t" style="left:344.40px;top:226.06px;font-size:7px;color:#fff;transform:scaleX(0.829);">100°C</div><div class="t" style="left:350.00px;top:311.86px;font-size:7px;color:#fff;transform:scaleX(0.902);">0°C</div><div class="t" style="left:689.00px;top:317.16px;font-size:7px;color:#fff;transform:scaleX(0.837);">18:10:50</div><div class="t" style="left:776.40px;top:235.06px;font-size:6.8px;color:#c4c8dc;transform:scaleX(0.846);">90</div><div class="t" style="left:776.40px;top:240.56px;font-size:6.8px;color:#9cacd4;transform:scaleX(0.846);">84</div><div class="t" style="left:784.20px;top:241.66px;font-size:6.8px;color:#d83cd8;transform:scaleX(0.793);">82</div><div class="t" style="left:784.20px;top:246.46px;font-size:6.8px;color:#00b400;transform:scaleX(0.793);">78</div><div class="t" style="left:776.40px;top:248.56px;font-size:6.8px;color:#00bcbc;transform:scaleX(0.846);">74</div><div class="t" style="left:776.90px;top:282.36px;font-size:6.8px;color:#d8c400;transform:scaleX(0.807);">35</div><svg class="a" style="left:349.3px;top:349.5px;overflow:visible" width="424.2" height="86.8" viewBox="0 0 424.2 86.8"><path d="M0.00 0V86.80M1.60 0V86.80M7.01 0V86.80M12.42 0V86.80M17.83 0V86.80M23.24 0V86.80M28.65 0V86.80M34.06 0V86.80M39.47 0V86.80M44.88 0V86.80M50.29 0V86.80M55.70 0V86.80M61.11 0V86.80M66.52 0V86.80M71.93 0V86.80M77.34 0V86.80M82.75 0V86.80M88.16 0V86.80M93.57 0V86.80M98.98 0V86.80M104.39 0V86.80M109.80 0V86.80M115.21 0V86.80M120.62 0V86.80M126.03 0V86.80M131.44 0V86.80M136.85 0V86.80M142.26 0V86.80M147.67 0V86.80M153.08 0V86.80M158.49 0V86.80M163.90 0V86.80M169.31 0V86.80M174.72 0V86.80M180.13 0V86.80M185.54 0V86.80M190.95 0V86.80M196.36 0V86.80M201.77 0V86.80M207.18 0V86.80M212.59 0V86.80M218.00 0V86.80M223.41 0V86.80M228.82 0V86.80M234.23 0V86.80M239.64 0V86.80M245.05 0V86.80M250.46 0V86.80M255.87 0V86.80M261.28 0V86.80M266.69 0V86.80M272.10 0V86.80M277.51 0V86.80M282.92 0V86.80M288.33 0V86.80M293.74 0V86.80M299.15 0V86.80M304.56 0V86.80M309.97 0V86.80M315.38 0V86.80M320.79 0V86.80M326.20 0V86.80M331.61 0V86.80M337.02 0V86.80M342.43 0V86.80M347.84 0V86.80M353.25 0V86.80M358.66 0V86.80M364.07 0V86.80M369.48 0V86.80M374.89 0V86.80M380.30 0V86.80M385.71 0V86.80M391.12 0V86.80M396.53 0V86.80M401.94 0V86.80M407.35 0V86.80M412.76 0V86.80M418.17 0V86.80M423.58 0V86.80M424.20 0V86.80M0 0.00H424.20M0 8.68H424.20M0 17.36H424.20M0 26.04H424.20M0 34.72H424.20M0 43.40H424.20M0 52.08H424.20M0 60.76H424.20M0 69.44H424.20M0 78.12H424.20M0 86.80H424.20" stroke="#006e00" stroke-width="0.85" fill="none"/><path d="M123.70 86.80H424.20" stroke="#00c800" stroke-width="1" fill="none"/><path d="M123.70 84.60 L126.30 85.60 L128.70 81.80 L130.10 72.80 L130.70 26.80 L131.30 4.80 L133.30 0.60 L134.70 0.00" stroke="#b8b800" stroke-width="1" fill="none" stroke-linejoin="round"/><path d="M134.70 0H424.20" stroke="#8c8c00" stroke-width="1.2" fill="none"/></svg><div class="t" style="left:332.40px;top:346.36px;font-size:7px;color:#fff;transform:scaleX(0.801);">100%</div><div class="t" style="left:338.75px;top:432.86px;font-size:7px;color:#fff;transform:scaleX(0.805);">0%</div><div class="t" style="left:522.50px;top:338.66px;font-size:7.2px;color:#d8d800;transform:scaleX(0.766);font-weight:bold;">CPU Usage</div><div class="t" style="left:556.00px;top:338.25px;font-size:7.6px;color:#fff;transform:scaleX(0.504);">|</div><div class="t" style="left:561.00px;top:338.66px;font-size:7.2px;color:#00d400;transform:scaleX(0.781);font-weight:bold;">CPU Throttling</div><div class="t" style="left:776.50px;top:346.86px;font-size:7px;color:#e0e000;transform:scaleX(0.787);">100%</div><div class="t" style="left:776.50px;top:432.86px;font-size:7px;color:#00e000;transform:scaleX(0.780);">0%</div><div class="t" style="left:322.00px;top:463.24px;font-size:8px;color:#000;transform:scaleX(0.785);">Remaining Battery:</div><div class="lb" style="left:382px;top:460.3px;width:43.2px;height:13.1px"></div><div class="t" style="left:389.00px;top:463.25px;font-size:7.6px;color:#00d000;transform:scaleX(0.788);font-weight:bold;">No battery</div><div class="t" style="left:437.30px;top:463.24px;font-size:8px;color:#000;transform:scaleX(0.759);">Test Started:</div><div class="lb" style="left:478.6px;top:460.3px;width:75.4px;height:13.1px"></div><div class="t" style="left:489.00px;top:463.35px;font-size:7.6px;color:#00d000;transform:scaleX(0.769);font-weight:bold;">08.11.2025 18:10:50</div><div class="t" style="left:566.60px;top:463.24px;font-size:8px;color:#000;transform:scaleX(0.777);">Elapsed Time:</div><div class="lb" style="left:612.5px;top:460.3px;width:43.4px;height:13.1px"></div><div class="t" style="left:622.80px;top:463.35px;font-size:7.6px;color:#00d000;transform:scaleX(0.727);font-weight:bold;">00:05:03</div><div class="btn" style="left:313.4px;width:39.6px;background:#cccccc;border-color:#c6c6c6"></div><div class="t" style="left:326.90px;top:487.74px;font-size:8px;color:#838383;transform:scaleX(0.745);">Start</div><div class="btn" style="left:357.4px;width:39.2px;background:#e5f1fb;border-color:#0078d7"></div><div class="t" style="left:370.80px;top:487.74px;font-size:8px;color:#000;transform:scaleX(0.753);">Stop</div><div class="btn" style="left:413.4px;width:39.2px;"></div><div class="t" style="left:425.70px;top:487.74px;font-size:8px;color:#000;transform:scaleX(0.763);">Clear</div><div class="btn" style="left:457.5px;width:38.9px;"></div><div class="t" style="left:470.25px;top:487.74px;font-size:8px;color:#000;transform:scaleX(0.735);">Save</div><div class="btn" style="left:513.3px;width:39.3px;"></div><div class="t" style="left:523.95px;top:487.74px;font-size:8px;color:#000;transform:scaleX(0.723);">CPUID</div><div class="btn" style="left:557px;width:39.8px;"></div><div class="t" style="left:560.70px;top:487.74px;font-size:8px;color:#000;transform:scaleX(0.751);">Preferences</div><div class="btn" style="left:770px;width:40px;background:#cccccc;border-color:#c6c6c6"></div><div class="t" style="left:782.00px;top:487.74px;font-size:8px;color:#838383;transform:scaleX(0.782);">Close</div>
</body></html>
